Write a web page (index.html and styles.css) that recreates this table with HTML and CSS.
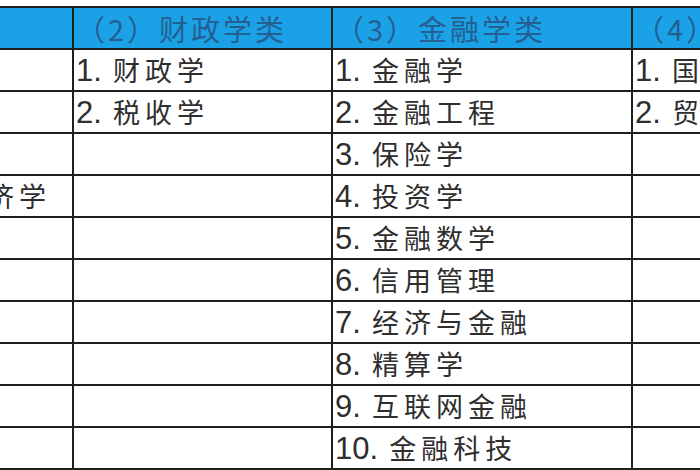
FILE: index.html
```html
<!DOCTYPE html>
<html lang="zh">
<head>
<meta charset="utf-8">
<link rel="stylesheet" href="styles.css">
</head>
<body>
<div class="sheet">
<table class="grid">
  <colgroup>
    <col class="c1"><col class="c2"><col class="c3"><col class="c4">
  </colgroup>
  <tr class="head">
    <th>（1）经济学类</th>
    <th>（2）财政学类</th>
    <th>（3）金融学类</th>
    <th>（4）经济与贸易类</th>
  </tr>
  <tr>
    <td><span class="n">1.</span> 经济学</td>
    <td><span class="n">1.</span> 财政学</td>
    <td><span class="n">1.</span> 金融学</td>
    <td><span class="n">1.</span> 国际经济与贸易</td>
  </tr>
  <tr>
    <td><span class="n">2.</span> 经济统计学</td>
    <td><span class="n">2.</span> 税收学</td>
    <td><span class="n">2.</span> 金融工程</td>
    <td><span class="n">2.</span> 贸易经济</td>
  </tr>
  <tr>
    <td><span class="n">3.</span> 国民经济管理</td>
    <td></td>
    <td><span class="n">3.</span> 保险学</td>
    <td></td>
  </tr>
  <tr>
    <td><span class="n">4.</span> 资源与环境经济学</td>
    <td></td>
    <td><span class="n">4.</span> 投资学</td>
    <td></td>
  </tr>
  <tr>
    <td><span class="n">5.</span> 商务经济学</td>
    <td></td>
    <td><span class="n">5.</span> 金融数学</td>
    <td></td>
  </tr>
  <tr>
    <td><span class="n">6.</span> 能源经济</td>
    <td></td>
    <td><span class="n">6.</span> 信用管理</td>
    <td></td>
  </tr>
  <tr>
    <td><span class="n">7.</span> 劳动经济学</td>
    <td></td>
    <td><span class="n">7.</span> 经济与金融</td>
    <td></td>
  </tr>
  <tr>
    <td><span class="n">8.</span> 经济工程</td>
    <td></td>
    <td><span class="n">8.</span> 精算学</td>
    <td></td>
  </tr>
  <tr>
    <td><span class="n">9.</span> 数字经济</td>
    <td></td>
    <td><span class="n">9.</span> 互联网金融</td>
    <td></td>
  </tr>
  <tr>
    <td></td>
    <td></td>
    <td><span class="n">10.</span> 金融科技</td>
    <td></td>
  </tr>
</table>
</div>
</body>
</html>
```
FILE: styles.css
```css
html, body {
  margin: 0;
  padding: 0;
  background: #ffffff;
  overflow: hidden;
  width: 700px;
  height: 470px;
}

.sheet {
  padding-top: 6px;
  margin-left: -246px;
  width: 1400px;
}

.grid {
  border-collapse: collapse;
  table-layout: fixed;
  width: 1177px;
}

.c1 { width: 318px; }
.c2 { width: 259px; }
.c3 { width: 300px; }
.c4 { width: 300px; }

.grid th,
.grid td {
  border: 2px solid #1f1f1f;
  height: 38px;
  padding: 0 0 0 2px;
  text-align: left;
  vertical-align: middle;
  white-space: nowrap;
  overflow: hidden;
}

.grid tr {
  height: 42px;
}

.head th {
  background: #1ba2e6;
  color: #245f92;
  font-family: "Noto Sans CJK SC", sans-serif;
  font-weight: 400;
  font-size: 29px;
  letter-spacing: 3px;
  line-height: 38px;
}

.grid td {
  color: #2e2e2e;
  font-family: "Noto Sans CJK SC", sans-serif;
  font-size: 27px;
  letter-spacing: 5px;
  line-height: 38px;
}

.n {
  font-family: "Liberation Sans", sans-serif;
  font-size: 31px;
  letter-spacing: 0;
}
```
